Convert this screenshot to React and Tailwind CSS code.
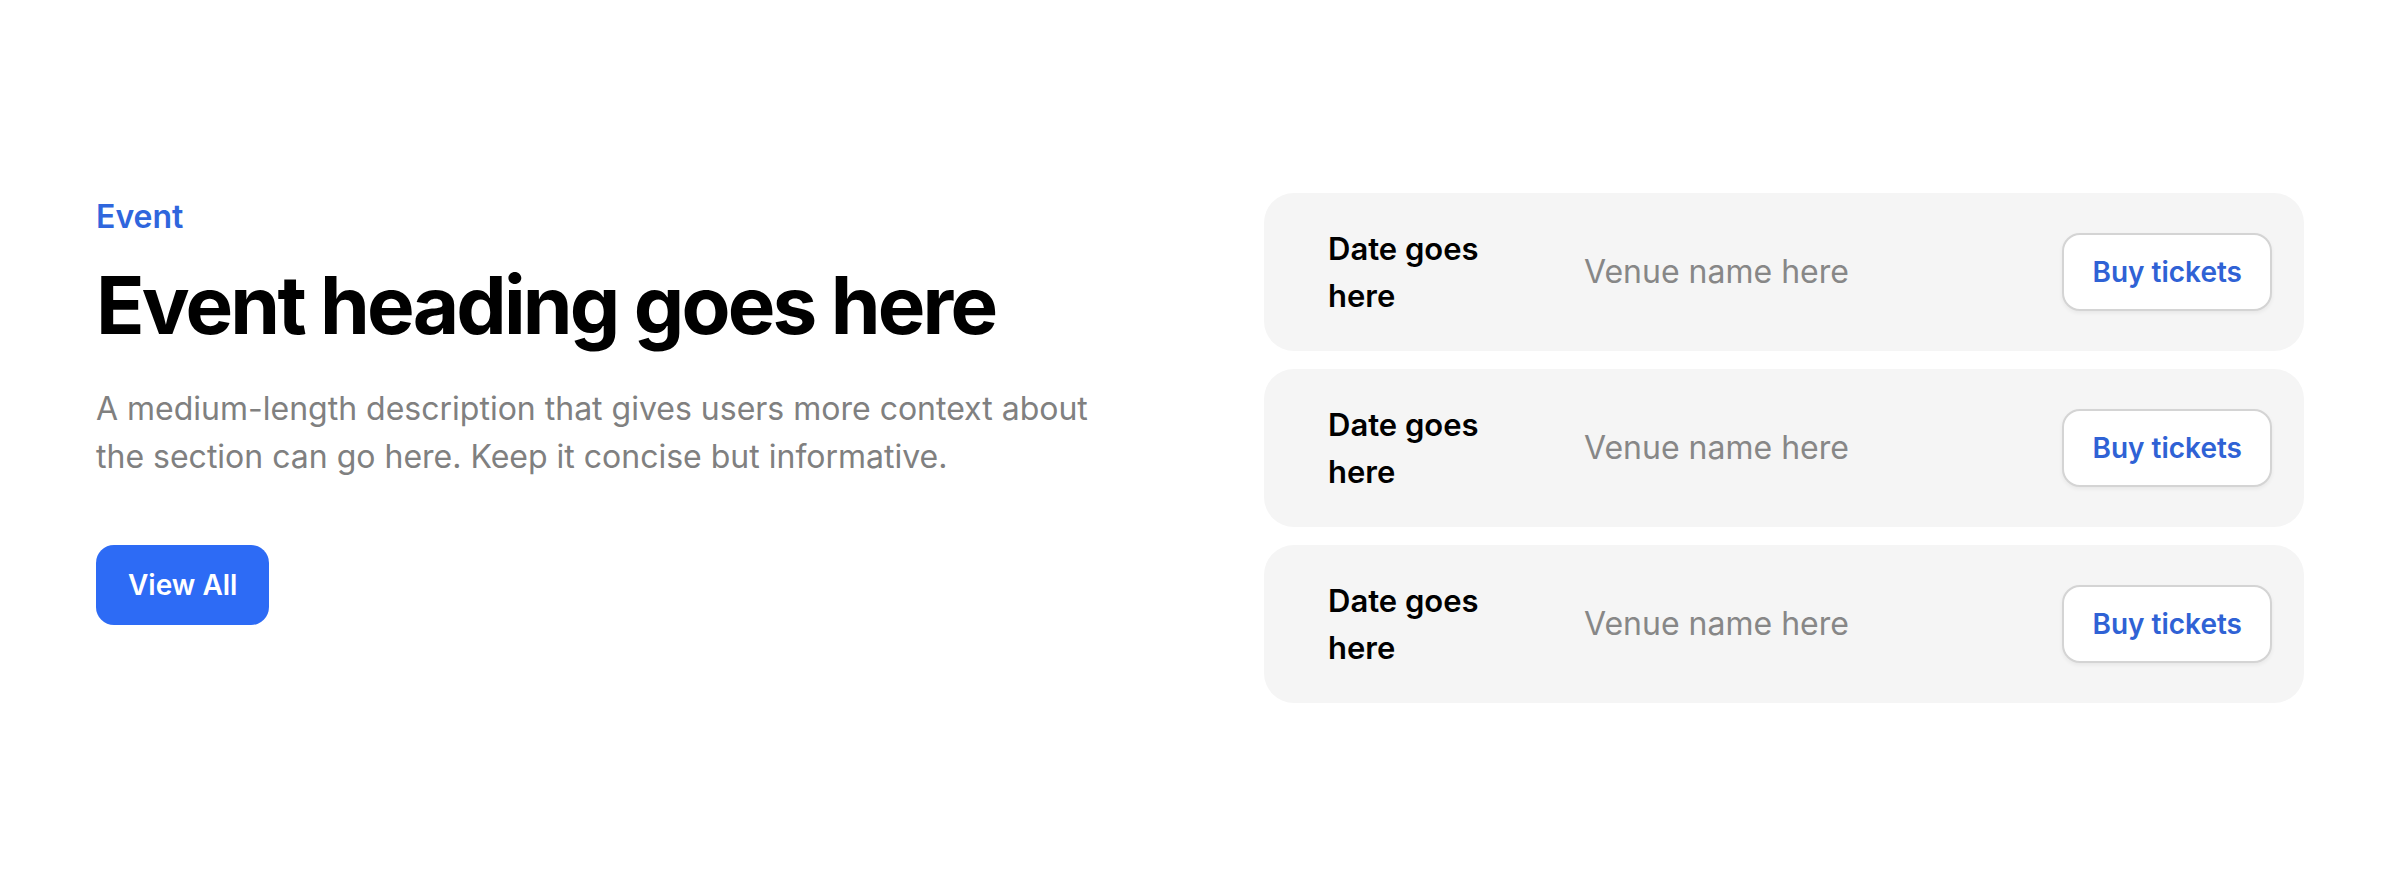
import React from 'react';

const events = [
  { date: 'Date goes here', venue: 'Venue name here' },
  { date: 'Date goes here', venue: 'Venue name here' },
  { date: 'Date goes here', venue: 'Venue name here' },
];

export default function App() {
  return (
    <section
      className="flex h-[896px] items-center bg-white px-[96px]"
      style={{ fontFamily: 'Inter, "Noto Sans", sans-serif' }}
    >
      <div className="grid w-full grid-cols-2 items-start gap-[128px]">
        {/* Left: intro */}
        <div>
          <p className="mb-4 text-[32px] font-semibold leading-[1.5] text-[#2f66dd]">Event</p>
          <h2 className="mb-8 text-[80px] font-bold leading-[1.2] tracking-[-0.035em] text-black">
            Event heading goes here
          </h2>
          <p className="text-[32px] leading-[1.5] text-[#808080]">
            A medium-length description that gives users more context about the section can go here. Keep it concise but informative.
          </p>
          <button className="mt-16 h-[80px] rounded-[18px] bg-[#2d6bf5] px-8 text-[28px] font-semibold text-white">
            View All
          </button>
        </div>

        {/* Right: event rows */}
        <div className="flex flex-col gap-[18px]">
          {events.map((ev, i) => (
            <div
              key={i}
              className="grid grid-cols-[200px_1fr_auto] items-center gap-x-[56px] rounded-[30px] bg-[#f5f5f5] py-8 pl-16 pr-8"
            >
              <div className="text-[31px] font-semibold leading-[47px] text-black">{ev.date}</div>
              <div className="text-[32px] leading-[1.5] text-[#878787]">{ev.venue}</div>
              <button className="h-[78px] rounded-[18px] border-2 border-[#d4d4d4] bg-white px-[28px] text-[28px] font-semibold text-[#2f62d5] shadow-[0_2px_4px_rgba(0,0,0,0.06)]">
                Buy tickets
              </button>
            </div>
          ))}
        </div>
      </div>
    </section>
  );
}
